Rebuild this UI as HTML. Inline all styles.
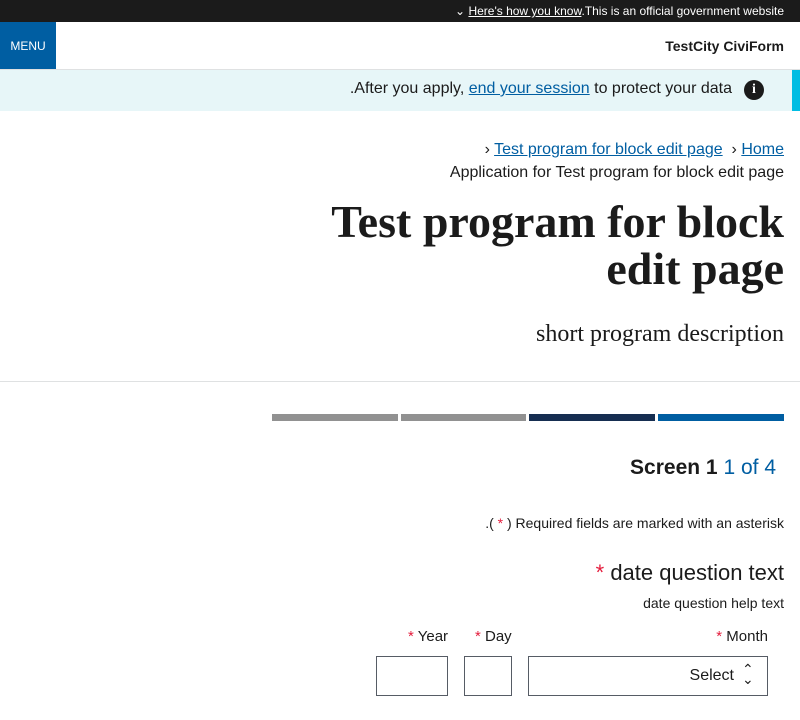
<!DOCTYPE html>
<html><head><meta charset="utf-8"><style>
body{margin:0;width:800px;height:720px;position:relative;background:#fff;font-family:"Liberation Sans",sans-serif;color:#1b1b1b;overflow:hidden}
.a{position:absolute;white-space:nowrap}
.r{text-align:right}
a{color:#005ea2;text-decoration:underline}
</style></head><body>
<div class="a" style="left:0;top:0;width:800px;height:22px;background:#1b1b1b"></div>
<div class="a r" style="right:16px;top:4px;font-size:12px;color:#fff">&#8964; <a style="color:#fff">Here's how you know</a>.This is an official government website</div>
<div class="a" style="left:0;top:22px;width:56px;height:48px;background:#005ea2;color:#fff;font-size:12px;line-height:48px;text-align:center">MENU</div>
<div class="a r" style="right:16px;top:38px;font-size:14px;font-weight:bold">TestCity CiviForm</div>
<div class="a" style="left:0;top:69px;width:800px;height:1px;background:#dfe1e2"></div>
<div class="a" style="left:0;top:70px;width:800px;height:41px;background:#e7f6f8"></div>
<div class="a" style="left:792px;top:70px;width:8px;height:41px;background:#00bde3"></div>
<div class="a r" style="right:68px;top:80px;font-size:16px">.After you apply, <a>end your session</a> to protect your data</div>
<div class="a" style="left:744px;top:80px;width:20px;height:20px;border-radius:50%;background:#1b1b1b;color:#fff;font-size:14px;font-weight:bold;text-align:center;line-height:20px;font-family:'Liberation Serif',serif">i</div>
<div class="a r" style="right:16px;top:141px;font-size:16px">› <a>Test program for block edit page</a> &nbsp;› <a>Home</a></div>
<div class="a r" style="right:16px;top:164px;font-size:16px">Application for Test program for block edit page</div>
<div class="a r" style="right:16px;top:198px;font-size:46px;font-weight:bold;font-family:'Liberation Serif',serif;line-height:47px">Test program for block<br>edit page</div>
<div class="a r" style="right:16px;top:321px;font-size:24px;font-family:'Liberation Serif',serif">short program description</div>
<div class="a" style="left:0;top:381px;width:800px;height:1px;background:#dfe1e2"></div>
<div class="a" style="left:272px;top:414px;width:126px;height:7px;background:#919191"></div>
<div class="a" style="left:401px;top:414px;width:125px;height:7px;background:#919191"></div>
<div class="a" style="left:529px;top:414px;width:126px;height:7px;background:#162e51"></div>
<div class="a" style="left:658px;top:414px;width:126px;height:7px;background:#005ea2"></div>
<div class="a r" style="right:24px;top:456px;font-size:21px"><b>Screen 1</b> <span style="color:#005ea2">1 of 4</span></div>
<div class="a r" style="right:16px;top:515px;font-size:14px">.( <span style="color:#e41d3d">*</span> ) Required fields are marked with an asterisk</div>
<div class="a r" style="right:16px;top:560px;font-size:22px"><span style="color:#e41d3d">*</span> date question text</div>
<div class="a r" style="right:16px;top:595px;font-size:14px">date question help text</div>
<div class="a" style="left:408px;top:628px;font-size:15px"><span style="color:#e41d3d">*</span> Year</div>
<div class="a" style="left:475px;top:628px;font-size:15px"><span style="color:#e41d3d">*</span> Day</div>
<div class="a r" style="right:32px;top:628px;font-size:15px"><span style="color:#e41d3d">*</span> Month</div>
<div class="a" style="left:376px;top:656px;width:70px;height:38px;border:1px solid #565c65"></div>
<div class="a" style="left:464px;top:656px;width:46px;height:38px;border:1px solid #565c65"></div>
<div class="a" style="left:528px;top:656px;width:238px;height:38px;border:1px solid #565c65"></div>
<div class="a r" style="right:66px;top:667px;font-size:16px">Select</div>
<div class="a" style="left:742px;top:664px;font-size:14px;line-height:10px">&#8963;<br>&#8964;</div>
</body></html>
